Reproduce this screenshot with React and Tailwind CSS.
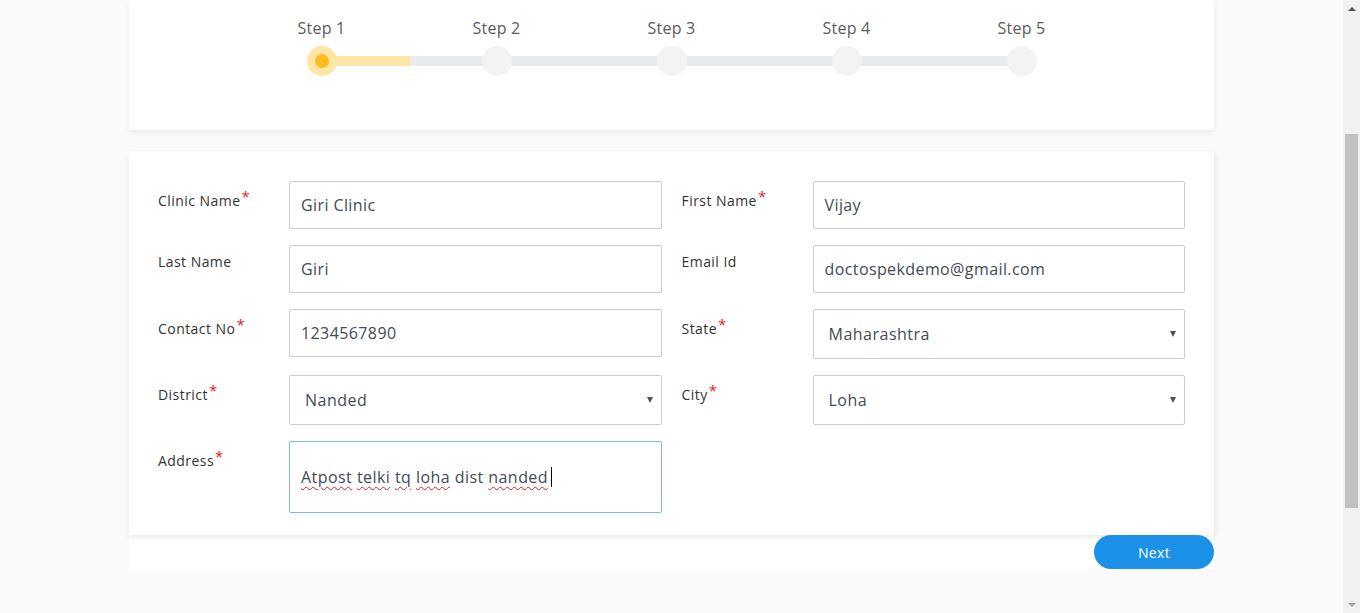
import React from "react";

const FONT = { fontFamily: '"Open Sans", "Liberation Sans", sans-serif' };

function Star() {
  return <span className="text-[#ea1a2e] text-[15px] leading-none relative top-[-4px] ml-[1px] tracking-normal">*</span>;
}

function Label({ text, req }) {
  return (
    <div className={`w-[131px] shrink-0 text-[14px] leading-[20px] tracking-[0.45px] text-[#333333] ${req ? "pt-[10px]" : "pt-[7px]"}`}>
      {text}
      {req && <Star />}
    </div>
  );
}

function Input({ value }) {
  return (
    <div className="flex-1 h-[48px] border border-[#cccccc] rounded-[2px] bg-white flex items-center pl-[11px] text-[16px] tracking-[0.4px] text-[#434a55]">
      {value}
    </div>
  );
}

function Select({ value }) {
  return (
    <div className="flex-1 h-[50px] border border-[#cccccc] rounded-[2px] bg-white flex items-center pl-[15px] pr-[8px] text-[16px] tracking-[0.5px] text-[#434a55]">
      <span className="flex-1">{value}</span>
      <span className="w-0 h-0 border-l-[3.5px] border-r-[3.5px] border-t-[6px] border-l-transparent border-r-transparent border-t-[#505050]" />
    </div>
  );
}

function Field({ label, req, children }) {
  return (
    <div className="flex items-start">
      <Label text={label} req={req} />
      {children}
    </div>
  );
}

function Wavy({ children }) {
  return <span className="underline decoration-wavy decoration-[#e02020] decoration-[1px] underline-offset-[3px]">{children}</span>;
}

function Step({ label, active }) {
  return (
    <div className="w-[175px] flex flex-col items-center">
      <div className="text-[16px] leading-[24px] text-[#5b5b5b] tracking-[0.2px]">{label}</div>
      <div className="mt-[6px] relative z-10">
        {active ? (
          <div className="w-[30px] h-[30px] rounded-full bg-[#fde6a4] flex items-center justify-center">
            <div className="w-[14px] h-[14px] rounded-full bg-[#fbbd1f]" />
          </div>
        ) : (
          <div className="w-[30px] h-[30px] rounded-full bg-[#f3f3f3]" />
        )}
      </div>
    </div>
  );
}

export default function App() {
  return (
    <div className="flex min-h-[613px] h-[613px] overflow-hidden bg-[#fafafa]" style={FONT}>
      <div className="flex-1">
        <div className="w-[1085px] mx-auto">
          {/* Stepper card */}
          <div className="h-[130px] bg-white shadow-[0_2px_5px_rgba(0,0,0,0.07)] pt-[16px]">
            <div className="relative flex justify-center">
              <div className="absolute left-[193px] w-[699px] top-[40px] h-[10px] bg-[#e8ebee]" />
              <div className="absolute left-[193px] w-[88px] top-[40px] h-[10px] bg-[#fde6a4]" />
              <Step label="Step 1" active />
              <Step label="Step 2" />
              <Step label="Step 3" />
              <Step label="Step 4" />
              <Step label="Step 5" />
            </div>
          </div>

          {/* Form */}
          <div className="mt-[21px] bg-white">
            <div className="bg-white shadow-[0_3px_6px_rgba(0,0,0,0.07),3px_0_6px_rgba(0,0,0,0.03)] px-[29px] pt-[30px] pb-[22px]">
              <div className="grid grid-cols-2 gap-x-[20px] gap-y-[16px]">
                <Field label="Clinic Name" req><Input value="Giri Clinic" /></Field>
                <Field label="First Name" req><Input value="Vijay" /></Field>
                <Field label="Last Name"><Input value="Giri" /></Field>
                <Field label="Email Id"><Input value="doctospekdemo@gmail.com" /></Field>
                <Field label="Contact No" req><Input value="1234567890" /></Field>
                <Field label="State" req><Select value="Maharashtra" /></Field>
                <Field label="District" req><Select value="Nanded" /></Field>
                <Field label="City" req><Select value="Loha" /></Field>
                <Field label="Address" req>
                  <div className="flex-1 h-[72px] border border-[#7db6f2] rounded-[2px] bg-white flex items-center pl-[11px] text-[16px] tracking-[0.45px] text-[#434a55]">
                    <span>
                      <Wavy>Atpost</Wavy> <Wavy>telki</Wavy> <Wavy>tq</Wavy> <Wavy>loha</Wavy> dist <Wavy>nanded</Wavy>{" "}
                    </span>
                    <span className="inline-block w-[1px] h-[20px] bg-black ml-[3px]" />
                  </div>
                </Field>
              </div>
            </div>
            <div className="flex justify-end">
              <button className="w-[120px] h-[34px] rounded-full bg-[#1c91ea] text-white text-[14px] font-medium tracking-[0.3px]">
                Next
              </button>
            </div>
          </div>
        </div>
      </div>

      {/* Fake scrollbar */}
      <div className="w-[17px] bg-[#f1f1f1] flex flex-col items-center">
        <div className="h-[17px] flex items-center justify-center">
          <div className="w-0 h-0 border-l-[4px] border-r-[4px] border-b-[4px] border-l-transparent border-r-transparent border-b-[#505050]" />
        </div>
        <div className="mt-[117px] w-[13px] h-[374px] bg-[#c1c1c1]" />
        <div className="flex-1" />
        <div className="h-[17px] flex items-center justify-center">
          <div className="w-0 h-0 border-l-[4px] border-r-[4px] border-t-[4px] border-l-transparent border-r-transparent border-t-[#a3a3a3]" />
        </div>
      </div>
    </div>
  );
}
